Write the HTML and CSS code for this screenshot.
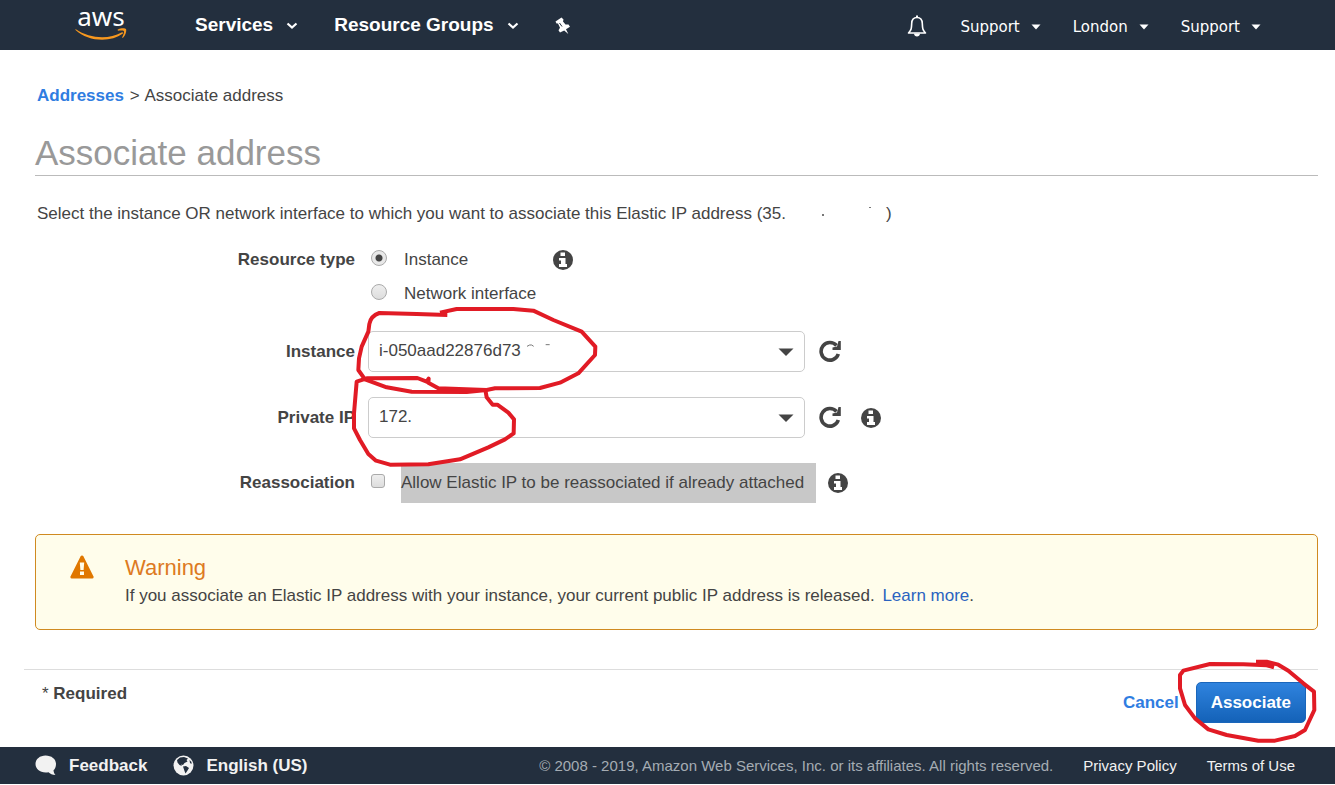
FILE: index.html
```html
<!DOCTYPE html>
<html lang="en">
<head>
  <meta charset="UTF-8" />
  <meta name="viewport" content="width=device-width, initial-scale=1.0"/>
  <title>Associate address</title>
  <link rel="stylesheet" href="styles.css">
</head>
<body>
  <!-- shared icons -->
  <svg class="sprite" aria-hidden="true">
    <symbol id="chevron" viewBox="0 0 12 8"><path d="M1.5 1.5 L6 5.5 L10.500 1.5" fill="none" stroke="currentColor" stroke-width="2.2"/></symbol>
    <symbol id="caret" viewBox="0 0 10 6"><path d="M0.500 0.500h9L5 5.500z" fill="currentColor"/></symbol>
    <symbol id="info" viewBox="0 0 20 20">
      <circle cx="10" cy="10" r="10" fill="#444"/>
      <path d="M7.500 2.500h4.500v3.500H7.500zM6 8H12.500v6H14v3H6V14H8v-3.500H6z" fill="#fff"/>
    </symbol>
    <symbol id="refresh" viewBox="0 0 22 22">
      <path d="M17.500 5.500A8.800 8.800 0 1 0 19.300 14" fill="none" stroke="#444" stroke-width="3.600"/>
      <path d="M21.800 1v9H13.500V7.500L18 6.500L19.500 1z" fill="#444"/>
    </symbol>
  </svg>

  <header class="topbar">
    <a href="#" class="logo" aria-label="AWS home">
      <span>aws</span>
      <svg width="52" height="13" viewBox="0 0 52 13">
        <path d="M0.500 1C15 11 34 11.500 46.500 4.500C48 3.800 48.500 5 47.500 5.800C36 14.500 13 14 0.500 2z" fill="#f7981f"/>
        <path d="M42.500 1.800C45.500 0 50 0 51 1C51.800 3 50.500 7.500 48 9.800C47.200 10.200 47 9.800 47.300 9C48.500 6.500 49.500 4 48.800 3C48 2.200 45 2.500 43 2.700z" fill="#f7981f"/>
      </svg>
    </a>
    <nav class="nav-main">
      <a href="#">Services <svg width="12" height="8"><use href="#chevron"/></svg></a>
      <a href="#">Resource Groups <svg width="12" height="8"><use href="#chevron"/></svg></a>
      <a href="#" aria-label="Pin shortcuts">
        <svg width="16" height="18" viewBox="0 0 16 18">
          <path d="M0.500 4.500L6.500 0.500L8.500 2.500L8 4.500L10.500 7.500L13.500 7.500L15 9.800L11 12.300L13.300 17L9.200 13.500L5 15.500L3.500 13.300L5 10.800L3 6.500L1.500 6.500z" fill="#fff"/>
          <path d="M4.500 6L7 9.500" stroke="#232f3e" fill="none"/>
        </svg>
      </a>
    </nav>
    <nav class="nav-account">
      <a href="#" aria-label="Notifications">
        <svg width="20" height="22" viewBox="0 0 20 22">
          <path d="M1.500 18H18.500C15.500 15 15.500 13 15.300 8.500C15.200 4.500 13 2.500 10 2.500S4.800 4.500 4.700 8.500C4.500 13 4.500 15 1.500 18z" fill="none" stroke="#fff" stroke-width="1.600" stroke-linejoin="round"/>
          <path d="M9 0.500h2v2H9zM7 18.500h6c0 4-6 4-6 0z" fill="#fff"/>
        </svg>
      </a>
      <a href="#">Support <svg width="10" height="6"><use href="#caret"/></svg></a>
      <a href="#">London <svg width="10" height="6"><use href="#caret"/></svg></a>
      <a href="#">Support <svg width="10" height="6"><use href="#caret"/></svg></a>
    </nav>
  </header>

  <main>
    <p class="breadcrumb"><a href="#">Addresses</a> <span>&gt;</span> Associate address</p>
    <h1>Associate address</h1>
    <p class="intro">
      <span>Select the instance OR network interface to which you want to associate this Elastic IP address (35.</span>
      <svg width="100" height="24" viewBox="0 0 100 24"><path d="M36 12h2v2h-2zM83 5h2v1h-2z" fill="#777"/></svg>
      <span>)</span>
    </p>

    <form id="associate-form">
      <div class="row row-type" role="radiogroup" aria-labelledby="type-label">
        <span class="row-label" id="type-label">Resource type</span>
        <div class="choices">
          <div class="choice">
            <input type="radio" id="type-instance" name="type" checked>
            <label for="type-instance">Instance</label>
            <svg class="info" width="20" height="20"><use href="#info"/></svg>
          </div>
          <div class="choice">
            <input type="radio" id="type-network" name="type">
            <label for="type-network">Network interface</label>
          </div>
        </div>
      </div>

      <div class="row">
        <label class="row-label" for="instance">Instance</label>
        <div class="select-wrap">
          <select id="instance">
            <option>i-050aad22876d73</option>
          </select>
          <svg class="arrow" width="16" height="8" viewBox="0 0 16 8"><path d="M0.500 0.500h15L8 8z" fill="#444"/></svg>
        </div>
        <button type="button" class="icon-btn" aria-label="Refresh instances"><svg width="22" height="22"><use href="#refresh"/></svg></button>
      </div>

      <div class="row">
        <label class="row-label" for="private-ip">Private IP</label>
        <div class="select-wrap">
          <select id="private-ip">
            <option>172.</option>
          </select>
          <svg class="arrow" width="16" height="8" viewBox="0 0 16 8"><path d="M0.500 0.500h15L8 8z" fill="#444"/></svg>
        </div>
        <button type="button" class="icon-btn" aria-label="Refresh addresses"><svg width="22" height="22"><use href="#refresh"/></svg></button>
        <svg class="info" width="20" height="20"><use href="#info"/></svg>
      </div>

      <div class="row row-last">
        <span class="row-label">Reassociation</span>
        <div class="choice">
          <input type="checkbox" id="reassociate">
          <label for="reassociate" class="highlight">Allow Elastic IP to be reassociated if already attached</label>
        </div>
        <svg class="info" width="20" height="20"><use href="#info"/></svg>
      </div>

      <!-- pen marks around the two fields -->
      <svg class="marks marks-fields" width="280" height="180" viewBox="0 0 840 540">
        <path d="M322 45L230 42L118 39Q92 48 88 72L85 95L65 140L57 175L55 210L75 238L140 262L215 275L380 276L440 270L465 265L600 264L660 248L715 220L765 165L766 140L725 95L640 60L580 32L520 27L350 27L300 38"/>
        <path d="M437 275L440 292L458 314L472 314L505 338L522 358L521 400L495 418L445 442L360 478L265 493L150 494L108 482L85 462L60 420L42 385L42 340L50 245L80 235L232 234L260 245L266 236L265 248L295 265L440 270"/>
        <path class="trace" d="M561 139L569 135H575L581 139M617 134H629"/>
      </svg>
    </form>

    <section class="warning">
      <svg width="24" height="24" viewBox="0 0 24 24">
        <path d="M12 0.500Q13 0.500 13.500 1.500L23.500 21.500Q24 23.500 22.500 23.500H1.500Q0 23.500 0.500 21.500L10.500 1.500Q11 0.500 12 0.500z" fill="#e07700"/>
        <path d="M9.800 7.500h4.400L13.600 15h-3.200zM10 16.500h4v3.500h-4z" fill="#fffdeb"/>
      </svg>
      <div>
        <h2>Warning</h2>
        <p>If you associate an Elastic IP address with your instance, your current public IP address is released. <a href="#">Learn more</a>.</p>
      </div>
    </section>

    <div class="actions">
      <span class="required">* <b>Required</b></span>
      <a href="#">Cancel</a>
      <div class="submit">
        <button type="submit" form="associate-form">Associate</button>
        <svg class="marks marks-submit" width="165" height="100" viewBox="0 0 495 300">
          <path d="M312 52L290 46L220 43L120 42L40 62L30 75L30 115L45 165L75 205L115 238L170 255L265 272L315 272L375 258L405 240L433 180L432 125L400 100L355 62L325 44L290 35L258 35"/>
        </svg>
      </div>
    </div>
  </main>

  <footer>
    <a href="#" class="foot-main">
      <svg width="22" height="21" viewBox="0 0 22 21"><path d="M10.500 0.500C16.500 0.500 21 4 21 9C21 12 20 14 18.500 15.200C18.500 17 19.500 19 20.500 20C17.500 20 15 18.500 13.500 17.200C6 18.500 0.500 14.500 0.500 9C0.500 4 5 0.500 10.500 0.500z" fill="#f2f2f2"/></svg>
      Feedback
    </a>
    <a href="#" class="foot-main">
      <svg width="21" height="21" viewBox="0 0 21 21">
        <circle cx="10.500" cy="10.500" r="10" fill="#f2f2f2"/>
        <path d="M4 5L7 2.500L11 2L15 3.500L13.500 5L14.500 6.500L11.500 8L10 10L8 9.500L9 11L6.500 10L4.500 7.500zM10 11.500L13 11L16 13L14.500 15.500L12.500 18.500L11.500 16zM16.500 5L18.500 7L18.500 9L17 8z" fill="#232f3e"/>
      </svg>
      English (US)
    </a>
    <span class="copyright">© 2008 - 2019, Amazon Web Services, Inc. or its affiliates. All rights reserved.</span>
    <a href="#">Privacy Policy</a>
    <a href="#">Terms of Use</a>
  </footer>
</body>
</html>
```
FILE: styles.css
```css
* {
  box-sizing: border-box;
}

body {
  margin: 0;
  font-family: "Liberation Sans", Arial, sans-serif;
  font-size: 17px;
  line-height: 24px;
  color: #444;
  background: #fff;
}

a {
  color: #2f7de1;
  text-decoration: none;
}

h1, h2, p {
  margin: 0;
  font-weight: normal;
}

svg {
  display: block;
  flex: none;
}

.sprite {
  position: absolute;
  width: 0;
  height: 0;
}

/* top bar */
.topbar {
  display: flex;
  align-items: center;
  height: 50px;
  padding: 0 74px 0 75px;
  background: #232f3e;
}

.topbar a {
  color: #fff;
}

.logo {
  width: 52px;
  padding-bottom: 6px;
  font-family: "Noto Sans", sans-serif;
  font-size: 26px;
  line-height: 26px;
  text-align: center;
}

.logo span {
  display: block;
  height: 25px;
}

.nav-main,
.nav-account {
  display: flex;
  align-items: center;
}

.nav-main {
  gap: 36px;
  margin-left: 68px;
  font-size: 19px;
  font-weight: bold;
}

.nav-main a,
.nav-account a {
  display: flex;
  align-items: center;
  gap: 13px;
}

.nav-main a svg {
  margin-top: 2px;
}

.nav-account {
  gap: 32px;
  margin-left: auto;
  padding-top: 4px;
  font-family: "DejaVu Sans", Verdana, sans-serif;
  font-size: 15px;
}

.nav-account a {
  gap: 11px;
}

.nav-account a:first-child {
  margin: 0 1px 2px 0;
}

/* content */
main {
  padding: 36px 17px 24px 35px;
}

.breadcrumb {
  padding-left: 2px;
  line-height: 20px;
}

.breadcrumb span {
  margin: 0 1px;
}

.breadcrumb a,
.actions a {
  font-weight: bold;
}

h1 {
  margin-top: 27px;
  padding-bottom: 2px;
  border-bottom: 1px solid #bbb;
  font-size: 35px;
  line-height: 40px;
  color: #999;
}

.intro {
  display: flex;
  margin-top: 26px;
  padding-left: 2px;
}

form {
  position: relative;
  margin-top: 17px;
}

.row {
  display: flex;
  align-items: center;
  height: 41px;
  margin-bottom: 25px;
}

.row-last {
  height: 40px;
  margin-bottom: 0;
}

.row-type {
  align-items: flex-start;
  height: auto;
  margin-bottom: 20px;
}

.row-label {
  width: 320px;
  margin-right: 13px;
  font-weight: bold;
  text-align: right;
}

.row-type .row-label,
.row-type .choice {
  line-height: 34px;
}

.choice {
  display: flex;
  align-items: center;
}

.row-type label {
  width: 149px;
}

input {
  appearance: none;
  width: 16px;
  height: 16px;
  margin: 0 17px 5px 3px;
  border: 1px solid #aaa;
  background: linear-gradient(#eee, #ddd);
}

input[type="radio"] {
  border-radius: 50%;
}

input[type="radio"]:checked {
  background: radial-gradient(circle, #444 0 3px, #e8e8e8 4px);
}

input[type="checkbox"] {
  width: 14px;
  height: 14px;
  margin-right: 16px;
  border-radius: 3px;
}

.highlight {
  padding-right: 12px;
  line-height: 40px;
  background: #c8c8c8;
}

.choice + .info {
  margin-left: 12px;
}

.select-wrap {
  position: relative;
  width: 437px;
}

select {
  appearance: none;
  width: 100%;
  height: 41px;
  padding: 0 36px 2px 10px;
  border: 1px solid #ccc;
  border-radius: 5px;
  background: #fff;
  font: inherit;
  color: #444;
}

.arrow {
  position: absolute;
  top: 17px;
  right: 11px;
  pointer-events: none;
}

button {
  font: inherit;
  cursor: pointer;
}

.icon-btn {
  margin-left: 14px;
  padding: 0 0 2px;
  border: 0;
  background: none;
}

.icon-btn + .info {
  margin-left: 20px;
}

/* red pen marks */
.marks {
  position: absolute;
  fill: none;
  stroke: #e11b25;
  stroke-width: 12;
  stroke-linejoin: round;
  pointer-events: none;
}

.marks .trace {
  stroke: #777;
  stroke-width: 3;
}

.marks-fields {
  top: 57px;
  left: 305px;
}

.marks-submit {
  top: -32px;
  left: -26px;
}

/* warning */
.warning {
  display: flex;
  gap: 31px;
  margin-top: 31px;
  padding: 19px 34px;
  border: 1px solid #d08a20;
  border-radius: 5px;
  background: #fffdeb;
}

.warning svg {
  margin-top: 1px;
}

h2 {
  font-size: 22px;
  line-height: 28px;
  color: #dd7a22;
}

.warning p {
  line-height: 28px;
}

.warning a {
  margin-left: 3px;
  color: #2a63c0;
}

/* bottom buttons */
.actions {
  display: flex;
  align-items: center;
  margin: 39px 0 0 -11px;
  padding: 12px 12px 0 18px;
  border-top: 1px solid #ddd;
}

.required {
  align-self: flex-start;
  margin-right: auto;
}

.submit {
  position: relative;
  margin-left: 17px;
}

.submit button {
  display: block;
  height: 41px;
  padding: 0 14px;
  border: 1px solid #1a66bb;
  border-radius: 5px;
  background: linear-gradient(#2f83de, #1462b8);
  font-weight: bold;
  color: #fff;
}

/* footer */
footer {
  display: flex;
  align-items: center;
  height: 37px;
  padding: 0 40px 0 35px;
  background: #232f3e;
  font-size: 15px;
}

footer a {
  margin-left: 30px;
  color: #f2f2f2;
}

.foot-main {
  display: flex;
  align-items: center;
  gap: 12px;
  margin-left: 0;
  margin-right: 26px;
  font-size: 17px;
  font-weight: bold;
}

.copyright {
  margin-left: auto;
  color: #a5acb3;
}
```
